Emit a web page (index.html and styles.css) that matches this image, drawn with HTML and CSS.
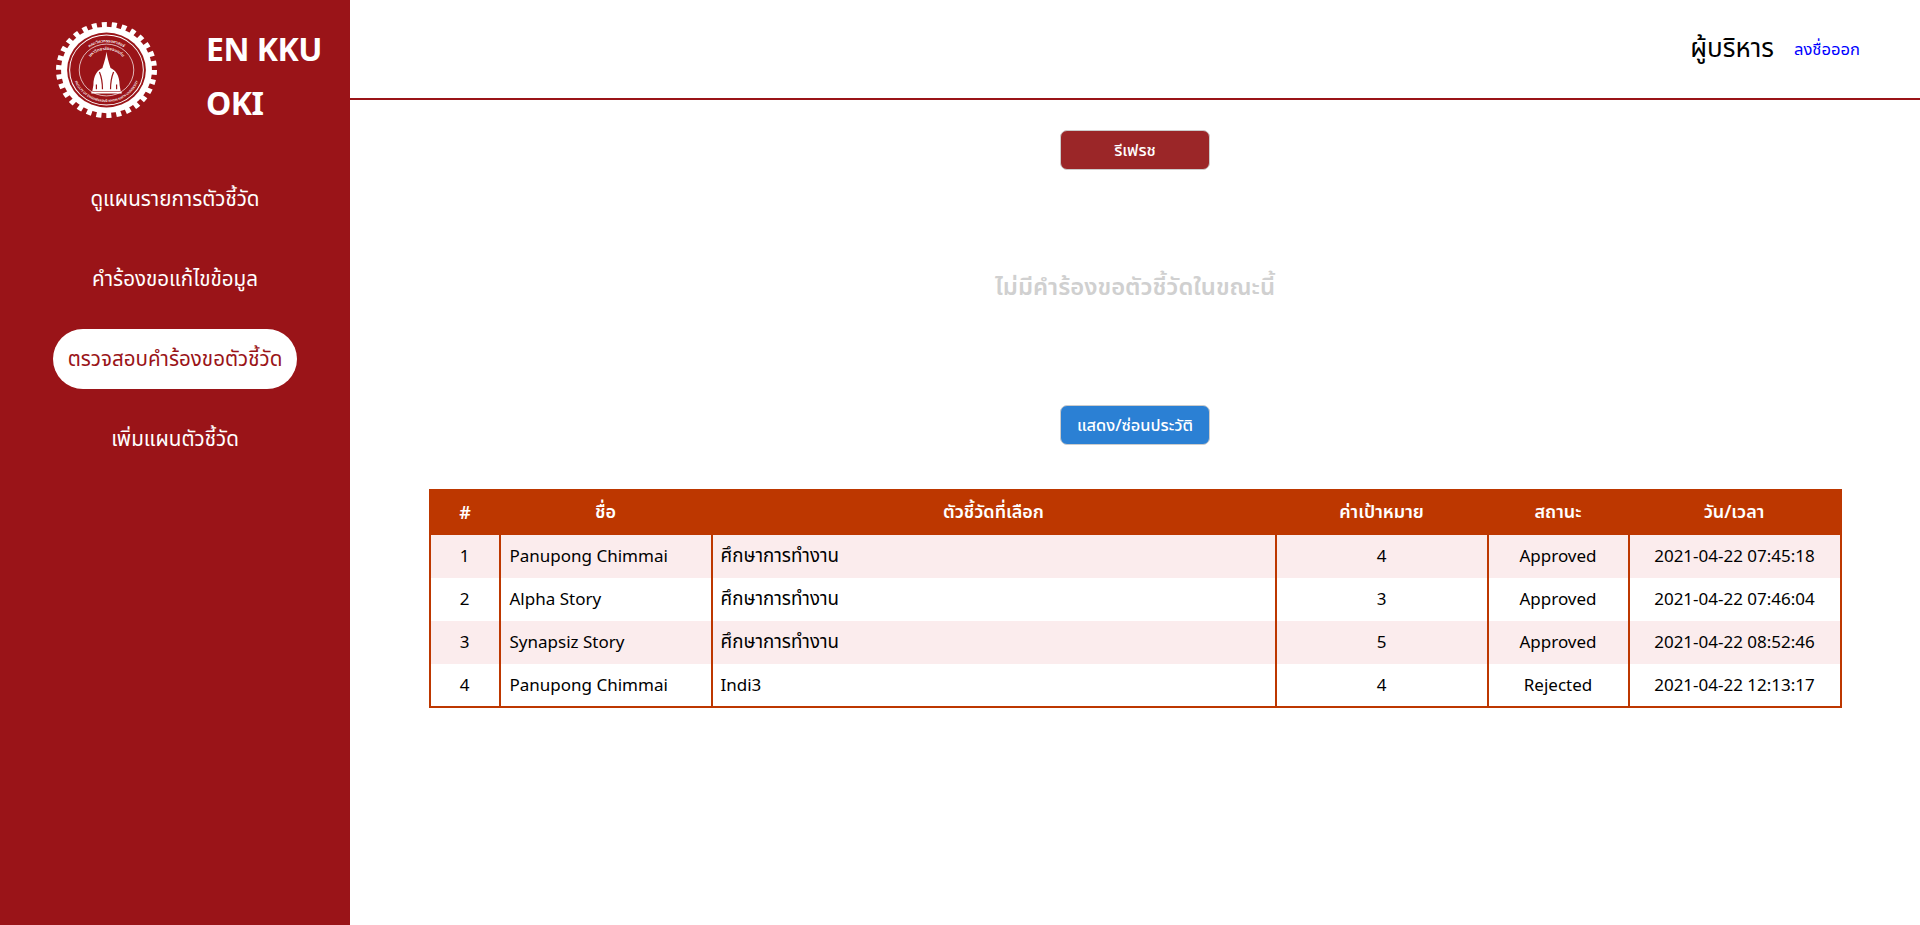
FILE: index.html
```html
<!DOCTYPE html>
<html lang="th">
<head>
    <meta charset="UTF-8">
    <meta name="viewport" content="width=device-width, initial-scale=1.0">
    <title>EN KKU OKI</title>
    <link rel="stylesheet" href="styles.css">
</head>
<body>
    <div class="page">
        <aside class="sidebar">
            <div class="brand">
                <svg class="brand-logo" viewBox="0 0 100 100" preserveAspectRatio="none" aria-hidden="true">
                    <circle cx="50" cy="50" r="47" fill="none" stroke="#fff" stroke-width="6" stroke-dasharray="5 4.84"/>
                    <circle cx="50" cy="50" r="45" fill="#fff"/>
                    <circle cx="50" cy="50" r="39" fill="#9a1418"/>
                    <circle cx="50" cy="50" r="36.5" fill="none" stroke="#fff" stroke-width="1"/>
                    <circle cx="50" cy="50" r="27" fill="none" stroke="#fff" stroke-width="0.7"/>
                    <defs>
                        <path id="sealTop" d="M21 50a29 29 0 0 1 58 0"/>
                        <path id="sealInner" d="M29 50a21 21 0 0 1 42 0"/>
                        <path id="sealBottom" d="M18 40a33.5 33.5 0 1 0 64 0"/>
                    </defs>
                    <text class="seal-text"><textPath href="#sealTop" startOffset="50%" text-anchor="middle">คณะวิศวกรรมศาสตร์</textPath></text>
                    <text class="seal-text"><textPath href="#sealInner" startOffset="50%" text-anchor="middle">มหาวิทยาลัยขอนแก่น</textPath></text>
                    <text class="seal-text seal-latin"><textPath href="#sealBottom" startOffset="50%" text-anchor="middle">FACULTY OF ENGINEERING KHON KAEN UNIVERSITY</textPath></text>
                    <path fill="#fff" d="M50 31c1 8 3 13 4 17 5 2 9 8 9 18l1 6H36l1-6c0-10 4-16 9-18 1-4 3-9 4-17z"/>
                    <path fill="none" stroke="#9a1418" stroke-width="1.2" d="M46 70c0-7-1-13-3-18M54 70c0-7 1-13 3-18M40 70v-5M60 70v-5"/>
                    <rect x="35" y="72.5" width="30" height="2" fill="#fff"/>
                </svg>
                <div class="brand-name">EN KKU OKI</div>
            </div>
            <nav class="menu">
                <a class="menu-item" href="#">ดูแผนรายการตัวชี้วัด</a>
                <a class="menu-item" href="#">คำร้องขอแก้ไขข้อมูล</a>
                <a class="menu-item active" href="#">ตรวจสอบคำร้องขอตัวชี้วัด</a>
                <a class="menu-item" href="#">เพิ่มแผนตัวชี้วัด</a>
            </nav>
        </aside>

        <div class="main">
            <header class="topbar">
                <span class="role">ผู้บริหาร</span>
                <a class="logout" href="#">ลงชื่อออก</a>
            </header>

            <section class="content">
                <button class="btn btn-red" type="button">รีเฟรช</button>
                <p class="empty">ไม่มีคำร้องขอตัวชี้วัดในขณะนี้</p>
                <button class="btn btn-blue" type="button">แสดง/ซ่อนประวัติ</button>

                <table class="history">
                    <colgroup>
                        <col class="col-no">
                        <col class="col-name">
                        <col class="col-kpi">
                        <col class="col-target">
                        <col class="col-status">
                        <col class="col-date">
                    </colgroup>
                    <thead>
                        <tr>
                            <th>#</th>
                            <th>ชื่อ</th>
                            <th>ตัวชี้วัดที่เลือก</th>
                            <th>ค่าเป้าหมาย</th>
                            <th>สถานะ</th>
                            <th>วัน/เวลา</th>
                        </tr>
                    </thead>
                    <tbody>
                        <tr>
                            <td class="center">1</td>
                            <td>Panupong Chimmai</td>
                            <td class="thai">ศึกษาการทำงาน</td>
                            <td class="center">4</td>
                            <td class="center">Approved</td>
                            <td class="center">2021-04-22 07:45:18</td>
                        </tr>
                        <tr>
                            <td class="center">2</td>
                            <td>Alpha Story</td>
                            <td class="thai">ศึกษาการทำงาน</td>
                            <td class="center">3</td>
                            <td class="center">Approved</td>
                            <td class="center">2021-04-22 07:46:04</td>
                        </tr>
                        <tr>
                            <td class="center">3</td>
                            <td>Synapsiz Story</td>
                            <td class="thai">ศึกษาการทำงาน</td>
                            <td class="center">5</td>
                            <td class="center">Approved</td>
                            <td class="center">2021-04-22 08:52:46</td>
                        </tr>
                        <tr>
                            <td class="center">4</td>
                            <td>Panupong Chimmai</td>
                            <td>Indi3</td>
                            <td class="center">4</td>
                            <td class="center">Rejected</td>
                            <td class="center">2021-04-22 12:13:17</td>
                        </tr>
                    </tbody>
                </table>
            </section>
        </div>
    </div>
</body>
</html>
```

FILE: styles.css
```css
* {
    box-sizing: border-box;
}

body {
    margin: 0;
    font-family: "Noto Sans", "Noto Sans Thai", "Open Sans", sans-serif;
    background-color: #fff;
    color: #000;
}

.page {
    display: flex;
    min-height: 925px;
}

/* sidebar */
.sidebar {
    width: 350px;
    flex-shrink: 0;
    background-color: #9a1418;
    color: #fff;
}

.brand {
    display: flex;
    align-items: flex-start;
    height: 169px;
    padding: 22px 20px 0 56px;
}

.brand-logo {
    width: 101px;
    height: 96px;
    flex-shrink: 0;
}

.seal-text {
    font-size: 4.2px;
    font-weight: 600;
    fill: #fff;
}

.seal-latin {
    font-size: 3.2px;
}

.brand-name {
    width: 130px;
    margin-left: 49px;
    font-size: 32px;
    font-weight: 700;
    letter-spacing: -0.5px;
    line-height: 54px;
}

.menu {
    display: flex;
    flex-direction: column;
    align-items: center;
    gap: 20px;
}

.menu-item {
    display: block;
    height: 60px;
    padding: 0 15px;
    border-radius: 30px;
    color: #fff;
    font-size: 20.6px;
    line-height: 58px;
    text-decoration: none;
}

.menu-item.active {
    background-color: #fff;
    color: #9a1418;
}

/* top bar */
.main {
    flex: 1;
}

.topbar {
    display: flex;
    justify-content: flex-end;
    align-items: center;
    height: 100px;
    padding: 0 60px 0 0;
    border-bottom: 2px solid #9a1418;
}

.role {
    font-size: 26px;
}

.logout {
    margin-left: 20px;
    color: #0000ff;
    font-size: 16.6px;
    text-decoration: none;
}

/* content */
.content {
    display: flex;
    flex-direction: column;
    align-items: center;
    padding-top: 30px;
}

.btn {
    width: 150px;
    height: 40px;
    padding: 0;
    border: 1px solid #ccc;
    border-radius: 7px;
    color: #fff;
    font-family: inherit;
    font-size: 16.4px;
    font-weight: 500;
}

.btn-red {
    background-color: #9b2628;
}

.btn-blue {
    background-color: #2b80d4;
}

.empty {
    margin: 0;
    height: 235px;
    color: #d0d0d0;
    font-size: 23.8px;
    font-weight: 600;
    line-height: 232px;
}

.history {
    width: 90%;
    margin-top: 44px;
    table-layout: fixed;
    border-collapse: collapse;
    border: 2px solid #bd3700;
    font-size: 17px;
}

.col-no { width: 70px; }
.col-name { width: 212px; }
.col-kpi { width: 564px; }
.col-target { width: 212px; }
.col-status { width: 141px; }

.history th {
    height: 45px;
    padding: 0 0 2px;
    background-color: #bd3700;
    color: #fff;
    font-size: 18px;
    font-weight: 600;
}

.history td {
    height: 43px;
    padding: 0 8px 2px;
    border-left: 2px solid #bd3700;
}

.history td:first-child {
    border-left: 0;
}

.history td:nth-child(2) {
    padding-left: 9px;
}

.history .thai {
    font-size: 18.7px;
}

.history .center {
    text-align: center;
}

.history tbody tr:nth-child(odd) {
    background-color: #fbeced;
}
```
